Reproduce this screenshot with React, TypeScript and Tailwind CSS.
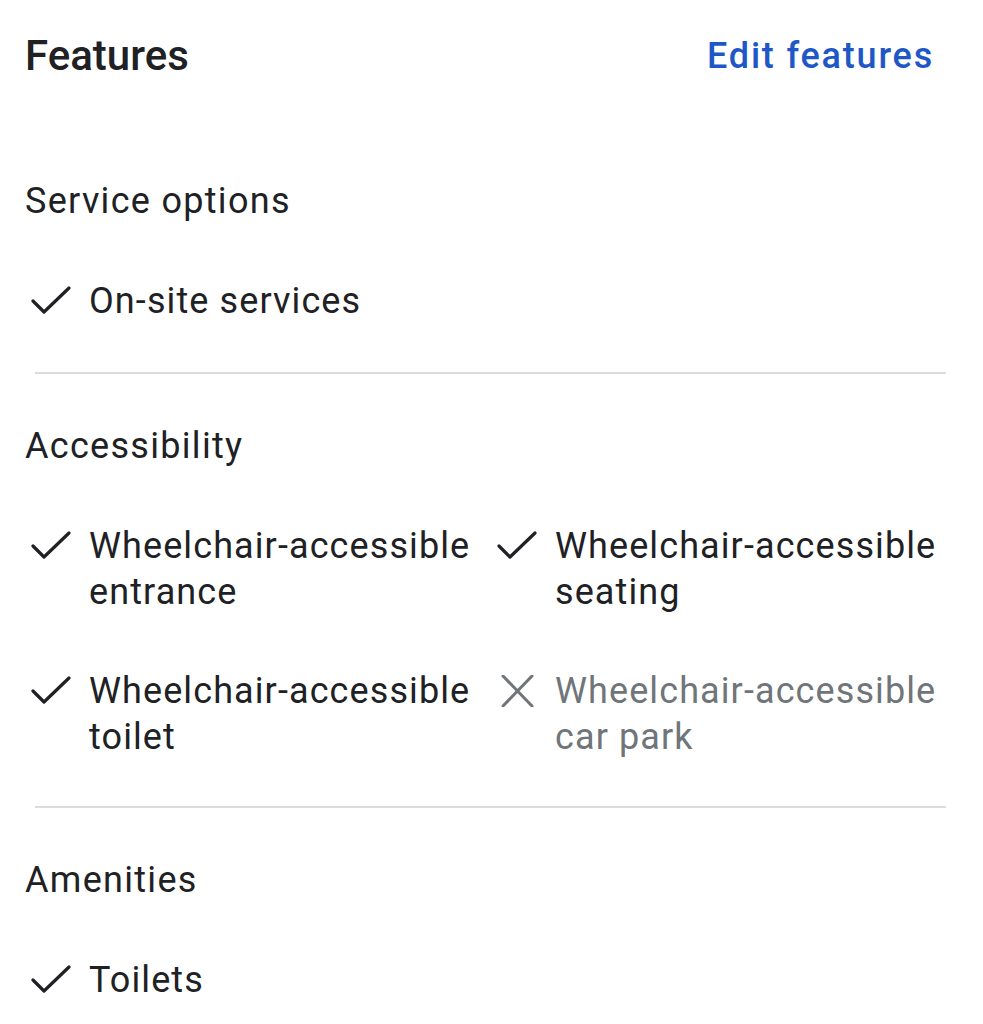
import React from "react";

function CheckIcon() {
  return (
    <svg width="40" height="32" viewBox="0 0 40 32" fill="none" className="shrink-0">
      <path d="M2 16 L13 27 L38 3" stroke="#202124" strokeWidth="3.2" strokeLinecap="round" strokeLinejoin="round" />
    </svg>
  );
}

function CrossIcon() {
  return (
    <svg width="40" height="32" viewBox="0 0 40 32" fill="none" className="shrink-0">
      <path d="M6 1 L35 31 M35 1 L6 31" stroke="#70757a" strokeWidth="3" strokeLinecap="round" />
    </svg>
  );
}

type Feature = { label: string; available: boolean };

function FeatureItem({ f }: { f: Feature }) {
  return (
    <div className="flex items-start gap-[18px]">
      <div className="h-[46px] flex items-center">{f.available ? <CheckIcon /> : <CrossIcon />}</div>
      <div className={`text-[36px] leading-[46px] tracking-[1.1px] ${f.available ? "text-[#202124]" : "text-[#70757a]"}`}>
        {f.label}
      </div>
    </div>
  );
}

function SectionTitle({ children, className = "" }: { children: React.ReactNode; className?: string }) {
  return <h2 className={`pl-[25px] text-[36px] leading-[44px] tracking-[1.3px] ${className}`}>{children}</h2>;
}

function Divider({ className = "" }: { className?: string }) {
  return <div className={`ml-[35px] w-[911px] h-[2px] bg-[#dadce0] ${className}`} />;
}

export default function App() {
  const accessibility: Feature[] = [
    { label: "Wheelchair-accessible entrance", available: true },
    { label: "Wheelchair-accessible seating", available: true },
    { label: "Wheelchair-accessible toilet", available: true },
    { label: "Wheelchair-accessible car park", available: false },
  ];

  return (
    <div className="w-[983px] h-[1024px] bg-white overflow-hidden pt-[30px] font-['Roboto',sans-serif] text-[#202124]">
      <div className="flex items-center justify-between pl-[25px] pr-[49px]">
        <h1 className="text-[42px] leading-[52px] font-medium">Features</h1>
        <a className="text-[36px] leading-[52px] font-medium tracking-[1.8px] text-[#1f58c6]">Edit features</a>
      </div>

      <SectionTitle className="mt-[97px]">Service options</SectionTitle>
      <div className="mt-[55px] pl-[31px]">
        <FeatureItem f={{ label: "On-site services", available: true }} />
      </div>

      <Divider className="mt-[48px]" />

      <SectionTitle className="mt-[50px]">Accessibility</SectionTitle>
      <div className="mt-[55px] pl-[31px] w-[946px] grid grid-cols-[466px_1fr] gap-y-[53px]">
        {accessibility.map((f) => (
          <FeatureItem key={f.label} f={f} />
        ))}
      </div>

      <Divider className="mt-[46px]" />

      <SectionTitle className="mt-[50px]">Amenities</SectionTitle>
      <div className="mt-[55px] pl-[31px]">
        <FeatureItem f={{ label: "Toilets", available: true }} />
      </div>
    </div>
  );
}
